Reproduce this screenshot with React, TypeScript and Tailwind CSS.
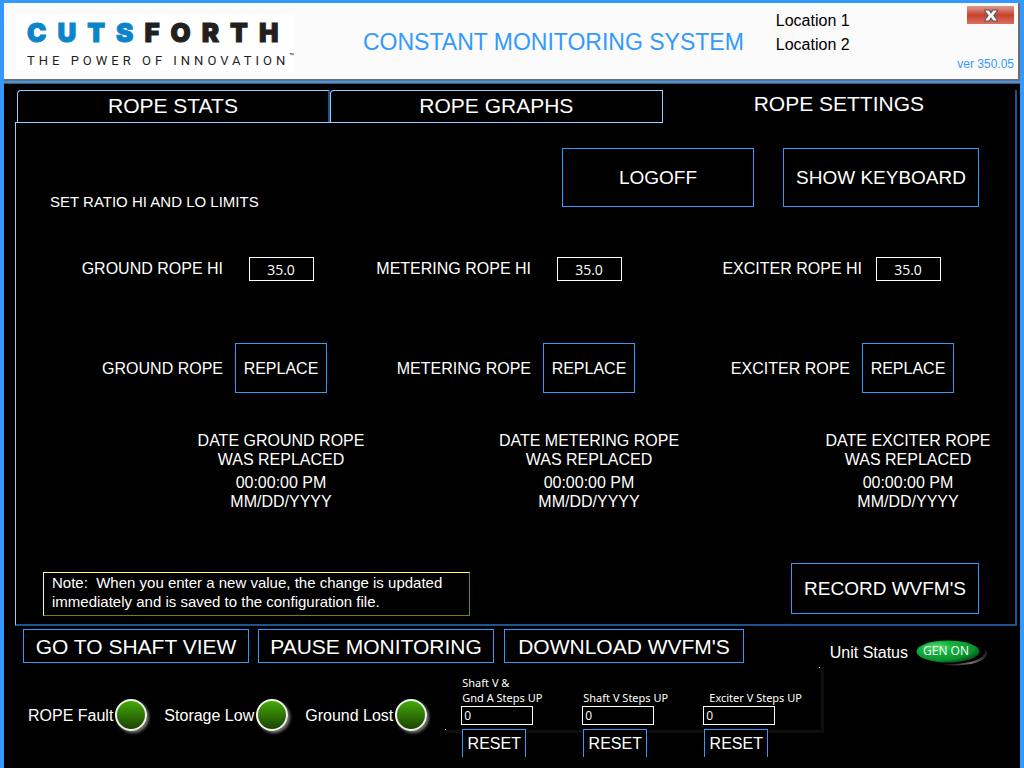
import React, { useId, useState } from "react";

const outline = "border border-[#3399ff] bg-black text-white whitespace-nowrap";

function Header() {
  return (
    <header className="flex h-[78px] items-start border-r-2 border-b-2 border-[#706c6c] bg-[#fbfbfb] pr-1 pl-3 font-['Liberation_Sans',Arial,sans-serif]">
      <div className="mt-3 flex h-14 w-[278px] flex-col bg-white pl-[11px]">
        <div className="mt-1 font-['Inter',sans-serif] text-[26px] leading-7 font-black tracking-[11px] whitespace-nowrap text-[#231f20] [-webkit-text-stroke:1px]">
          <span className="text-[#0b84cc]">CUTS</span>FORTH
        </div>
        <div className="mt-1 flex items-start font-['Roboto',sans-serif] text-[13px] leading-5 tracking-[4px] whitespace-nowrap text-[#231f20]">
          THE POWER OF INNOVATION
          <span className="text-[8px] leading-3 tracking-normal">™</span>
        </div>
      </div>
      <h1 className="ml-[69px] pt-[25px] text-[23px] leading-7 whitespace-nowrap text-[#3399ff]">
        CONSTANT MONITORING SYSTEM
      </h1>
      <div className="ml-8 pt-[6px] text-base leading-6 whitespace-nowrap text-black">
        <p>Location 1</p>
        <p>Location 2</p>
      </div>
      <div className="ml-auto flex flex-col items-end pt-[3px]">
        <button
          type="button"
          aria-label="Close"
          className="flex h-[18px] w-[47px] items-center justify-center bg-linear-to-b from-[#dc9a90] via-[#c8402c] via-50% to-[#d8705e]"
        >
          <svg viewBox="0 0 14 13" className="h-[13px] w-[14px]">
            <path
              d="M1 1h4.2L7 3.6 8.8 1H13v1.6L9.9 6.5l3.1 3.9V12H8.8L7 9.4 5.2 12H1v-1.6l3.1-3.9L1 2.6z"
              fill="#f4f4f4"
              stroke="#5b5560"
              strokeWidth="1.2"
            />
          </svg>
        </button>
        <p className="mt-8 text-xs leading-4 text-[#3399ff]">ver 350.05</p>
      </div>
    </header>
  );
}

function Tabs() {
  return (
    <div role="tablist" className="flex h-[33px] text-[21px]">
      <div className="flex flex-[647] border-b border-[#99ccff] pl-[2px]">
        <button
          type="button"
          role="tab"
          aria-selected="false"
          className="flex-[312] rounded-tl border-t border-r-2 border-l border-t-[#99ccff] border-r-[#1f5488] border-l-[#99ccff] pb-[2px] leading-7"
        >
          ROPE STATS
        </button>
        <button
          type="button"
          role="tab"
          aria-selected="false"
          className="flex-[333] rounded-tl border-t border-r border-l border-[#99ccff] pb-[2px] leading-7"
        >
          ROPE GRAPHS
        </button>
      </div>
      <button type="button" role="tab" aria-selected="true" className="flex-[353] pb-[6px] leading-6">
        ROPE SETTINGS
      </button>
    </div>
  );
}

function LimitField({ label, tight = false }: { label: string; tight?: boolean }) {
  const id = useId();
  const [value, setValue] = useState("35.0");
  return (
    <>
      <label htmlFor={id} className={`${tight ? "pr-0" : "pr-3"} text-right`}>
        {label}
      </label>
      <div className="flex justify-center pt-[2px]">
        <input
          id={id}
          value={value}
          onChange={(e) => setValue(e.target.value)}
          className="h-6 w-[65px] border border-white bg-black text-center font-['Open_Sans','Noto_Sans',sans-serif] text-sm"
        />
      </div>
    </>
  );
}

function ReplaceField({ label }: { label: string }) {
  return (
    <>
      <span className="pr-3 text-right">{label}</span>
      <button type="button" aria-label={`Replace ${label}`} className={`${outline} h-[50px]`}>
        REPLACE
      </button>
    </>
  );
}

function ReplacedDate({ name }: { name: string }) {
  return (
    <div className="flex flex-col items-center text-center">
      <p>
        DATE {name} ROPE
        <br />
        WAS REPLACED
      </p>
      <p className="mt-1">
        00:00:00 PM
        <br />
        MM/DD/YYYY
      </p>
    </div>
  );
}

const ropes = ["GROUND", "METERING", "EXCITER"];
const ropeGrid =
  "grid grid-cols-[219fr_92px_216fr_92px_227fr_92px_61fr] items-center whitespace-nowrap";

function Settings() {
  return (
    <section className="border-b-2 border-l border-b-[#1f5488] border-l-[#99ccff] pb-2 text-base leading-[19px]">
      <div className="flex items-start pt-[25px] pr-9 pl-[34px]">
        <h2 className="pt-11 text-[15px]">SET RATIO HI AND LO LIMITS</h2>
        <button type="button" className={`${outline} ml-auto h-[59px] w-48 text-[19px]`}>
          LOGOFF
        </button>
        <button type="button" className={`${outline} ml-[29px] h-[59px] w-[196px] text-[19px]`}>
          SHOW KEYBOARD
        </button>
      </div>
      <div className={`${ropeGrid} mt-11`}>
        {ropes.map((r) => (
          <LimitField key={r} label={`${r} ROPE HI`} tight={r === "EXCITER"} />
        ))}
      </div>
      <div className={`${ropeGrid} mt-[62px]`}>
        {ropes.map((r) => (
          <ReplaceField key={r} label={`${r} ROPE`} />
        ))}
      </div>
      <div className={`${ropeGrid} mt-[38px]`}>
        {ropes.map((r) => (
          <React.Fragment key={r}>
            <span />
            <ReplacedDate name={r} />
          </React.Fragment>
        ))}
      </div>
      <div className="mt-[52px] flex items-start justify-between pr-9 pl-[27px]">
        <p className="mt-[9px] h-11 w-[427px] border border-t-[#ffff66] border-r-[#808000] border-b-[#808000] border-l-[#ffff66] pl-2 text-[15px] whitespace-pre">
          {"Note:  When you enter a new value, the change is updated\nimmediately and is saved to the configuration file."}
        </p>
        <button type="button" className={`${outline} h-[51px] w-[188px] text-[19px]`}>
          RECORD WVFM'S
        </button>
      </div>
    </section>
  );
}

function Lamp({ label }: { label: string }) {
  return (
    <div className="flex items-center gap-[2px]">
      <span>{label}</span>
      <span className="size-8 rounded-full border-2 border-[#f4f4f0] bg-linear-to-b from-[#43ab08] to-[#1b4503] shadow-[2px_2px_3px_#777777]" />
    </div>
  );
}

function StepCounter({ lines, indent = false }: { lines: string[]; indent?: boolean }) {
  const id = useId();
  const [value, setValue] = useState("0");
  return (
    <div className="flex w-[72px] flex-col items-start">
      <label
        htmlFor={id}
        className={`${indent ? "pl-[6px]" : "pl-px"} flex h-[31px] flex-col justify-end pb-px font-['Noto_Sans','Open_Sans',sans-serif] text-[11px] leading-[15px] whitespace-nowrap`}
      >
        {lines.map((l) => (
          <span key={l}>{l}</span>
        ))}
      </label>
      <input
        id={id}
        value={value}
        onChange={(e) => setValue(e.target.value)}
        className="h-[19px] w-full border border-white bg-black pl-[2px] font-['Open_Sans','Noto_Sans',sans-serif] text-xs"
      />
      <button
        type="button"
        onClick={() => setValue("0")}
        className="mt-1 ml-px h-7 w-16 border border-b-0 border-[#3399ff] bg-black text-base"
      >
        RESET
      </button>
    </div>
  );
}

function UnitStatus() {
  return (
    <div className="flex items-center gap-2 pt-[10px] pr-8 text-base leading-6">
      <span>Unit Status</span>
      <div className="relative flex h-7 w-[72px] items-center">
        <svg viewBox="0 0 72 28" className="absolute inset-0 h-7 w-[72px]">
          <defs>
            <radialGradient id="lamp" cx="0.32" cy="0.3" r="0.75">
              <stop offset="0" stopColor="#5fdd7c" />
              <stop offset="0.35" stopColor="#12b23a" />
              <stop offset="0.8" stopColor="#0b9130" />
              <stop offset="1" stopColor="#04571a" />
            </radialGradient>
            <linearGradient id="rim" x1="0.3" x2="1">
              <stop offset="0" stopColor="#000000" />
              <stop offset="0.65" stopColor="#707070" />
              <stop offset="1" stopColor="#1c1c1c" />
            </linearGradient>
          </defs>
          <ellipse cx="38" cy="15" rx="33" ry="11.5" fill="url(#rim)" />
          <ellipse cx="35" cy="13" rx="34" ry="12" fill="#000000" />
          <ellipse cx="32" cy="12.5" rx="31.5" ry="11" fill="url(#lamp)" />
        </svg>
        <span className="relative w-[60px] pb-1 text-center font-['Open_Sans','Noto_Sans',sans-serif] text-xs leading-6">
          GEN ON
        </span>
      </div>
    </div>
  );
}

export default function App() {
  return (
    <div className="flex min-h-screen flex-col border-x-4 border-t-3 border-[#3399ff] bg-black font-['Liberation_Sans',Arial,sans-serif] text-white">
      <Header />
      <div className="h-[3px] border-b border-[#5c564e] bg-[#3399ff]" />
      <main className="mt-[6px] mr-[3px] ml-[11px] border-r-2 border-[#1f5488]">
        <Tabs />
        <Settings />
      </main>
      <footer className="text-base leading-[19px] whitespace-nowrap">
        <div className="flex items-start pt-[3px] pl-[19px] text-[21px]">
          <button type="button" className={`${outline} h-[34px] w-[226px]`}>
            GO TO SHAFT VIEW
          </button>
          <button type="button" className={`${outline} ml-[9px] h-[34px] w-[236px]`}>
            PAUSE MONITORING
          </button>
          <button type="button" className={`${outline} ml-[10px] h-[34px] w-[240px]`}>
            DOWNLOAD WVFM'S
          </button>
          <div className="ml-auto">
            <UnitStatus />
          </div>
        </div>
        <div className="flex items-start pl-6">
          <div className="flex gap-[17px] pt-8">
            <Lamp label="ROPE Fault" />
            <Lamp label="Storage Low" />
            <Lamp label="Ground Lost" />
          </div>
          <div className="relative ml-[18px] w-[379px] pt-2 pl-4">
            <div className="absolute inset-x-0 top-0 h-[66px] border-r-3 border-b-3 border-[#0e0e0e]" />
            <span className="absolute top-[62px] left-0 size-px bg-white" />
            <span className="absolute top-0 right-1 size-px bg-white" />
            <div className="relative flex gap-[49px]">
              <StepCounter lines={["Shaft V &", "Gnd A Steps UP"]} />
              <StepCounter lines={["Shaft V Steps UP"]} />
              <StepCounter lines={["Exciter V Steps UP"]} indent />
            </div>
          </div>
        </div>
      </footer>
    </div>
  );
}
